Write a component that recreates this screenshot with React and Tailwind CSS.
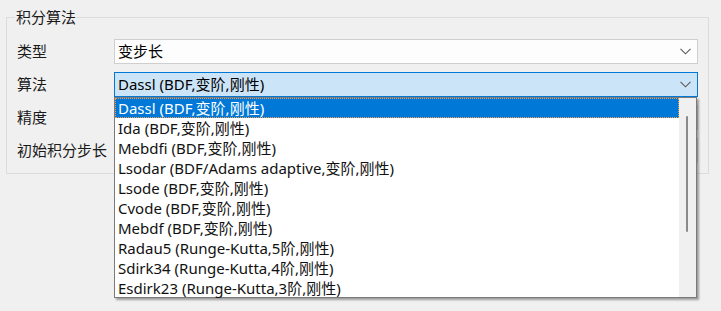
import React from 'react';

const algorithms = [
  'Dassl (BDF,变阶,刚性)',
  'Ida (BDF,变阶,刚性)',
  'Mebdfi (BDF,变阶,刚性)',
  'Lsodar (BDF/Adams adaptive,变阶,刚性)',
  'Lsode (BDF,变阶,刚性)',
  'Cvode (BDF,变阶,刚性)',
  'Mebdf (BDF,变阶,刚性)',
  'Radau5 (Runge-Kutta,5阶,刚性)',
  'Sdirk34 (Runge-Kutta,4阶,刚性)',
  'Esdirk23 (Runge-Kutta,3阶,刚性)',
];

const Chevron = () => (
  <svg width="11" height="7" viewBox="0 0 11 7" className="shrink-0">
    <path d="M0.5 0.8 L5.5 5.8 L10.5 0.8" fill="none" stroke="#5a5a5a" strokeWidth="1.1" />
  </svg>
);

const Row = ({ label, children }) => (
  <div className="flex items-center h-[25px]">
    <div className="w-[97px] shrink-0 text-[15px] text-[#1a1a1a]">{label}</div>
    <div className="flex-1 h-full">{children}</div>
  </div>
);

const App = () => {
  return (
    <div
      className="relative w-[721px] h-[311px] overflow-hidden bg-[#f0f0f0] text-black"
      style={{ fontFamily: '"Noto Sans", "Noto Sans CJK SC", sans-serif' }}
    >
      <div className="relative mt-[17px] ml-[6px] w-[703px] h-[157px] border border-[#dcdcdc] pt-[21px] pl-[10px] pr-[10px] flex flex-col gap-[8px]">
        <span className="absolute -top-[10px] left-[8px] px-[1px] bg-[#f0f0f0] text-[15px] leading-[18px] text-[#1a1a1a]">积分算法</span>

        <Row label="类型">
          <div className="h-full flex items-center justify-between border border-[#cfcfcf] bg-[#fdfdfd] pl-[3px] pr-[6px] text-[15px]">
            <span>变步长</span>
            <Chevron />
          </div>
        </Row>

        <Row label="算法">
          <div className="h-full flex items-center justify-between border border-[#0078d7] bg-[#cce4f7] pl-[3px] pr-[6px] text-[15px]">
            <span>Dassl (BDF,变阶,刚性)</span>
            <Chevron />
          </div>
        </Row>

        <Row label="精度">
          <div className="h-full border border-[#cfcfcf] bg-white" />
        </Row>

        <Row label="初始积分步长">
          <div className="h-full border border-[#cfcfcf] bg-white" />
        </Row>
      </div>

      {/* open dropdown list */}
      <div className="absolute left-[114px] top-[97px] w-[583px] h-[201px] border border-[#7a7a7a] bg-white shadow-[2px_2px_2px_rgba(0,0,0,0.35)] flex">
        <div className="flex-1 flex flex-col">
          {algorithms.map((a, i) => (
            <div
              key={a}
              className={
                i === 0
                  ? 'h-[20px] flex items-center pl-[2px] bg-[#0078d7] text-white text-[15px] border border-dotted border-[#f0a050] whitespace-nowrap'
                  : 'h-[20px] flex items-center pl-[3px] text-[15px] text-[#111] whitespace-nowrap'
              }
            >
              {a}
            </div>
          ))}
        </div>
        <div className="w-[17px] h-full bg-[#f0f0f0] pl-[7px] pt-[18px]">
          <div className="w-[2px] h-[116px] bg-[#8a8a8a] rounded-full" />
        </div>
      </div>
    </div>
  );
};

export default App;
